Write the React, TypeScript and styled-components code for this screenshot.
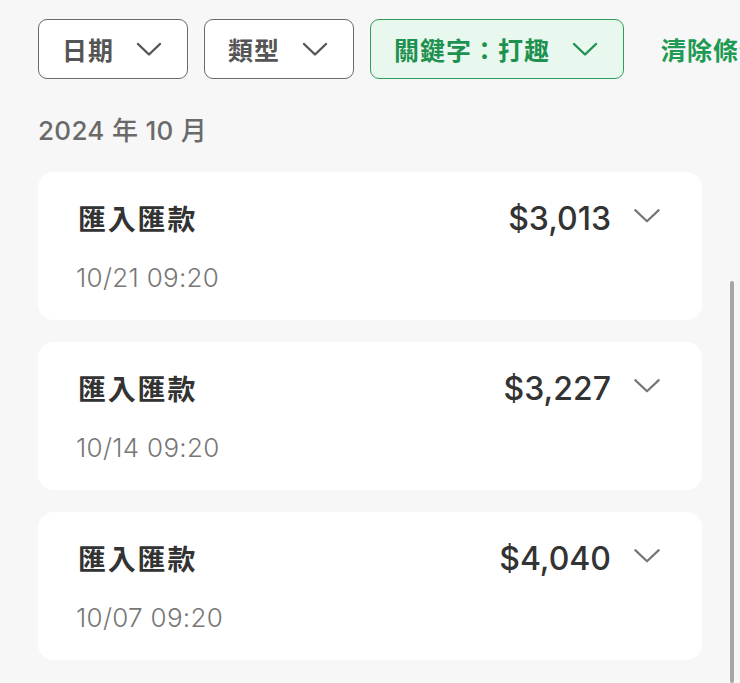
import React from "react";
import styled, { createGlobalStyle } from "styled-components";

const GlobalStyle = createGlobalStyle`
  html, body {
    margin: 0;
    padding: 0;
    background: #f7f7f7;
    font-family: Inter, "Noto Sans CJK TC", sans-serif;
    overflow: hidden;
  }
`;

type Tx = { title: string; amount: string; time: string };

const items: Tx[] = [
  { title: "匯入匯款", amount: "$3,013", time: "10/21 09:20" },
  { title: "匯入匯款", amount: "$3,227", time: "10/14 09:20" },
  { title: "匯入匯款", amount: "$4,040", time: "10/07 09:20" },
];

const Chevron = ({ size = 26, stroke = 2.4 }: { size?: number; stroke?: number }) => (
  <svg width={size} height={size / 2 + 2} viewBox="0 0 26 15" fill="none">
    <path d="M2 2 L13 12.5 L24 2" stroke="currentColor" strokeWidth={stroke} strokeLinecap="round" strokeLinejoin="round" />
  </svg>
);

const App = () => {
  return (
    <Page>
      <GlobalStyle />
      <FilterBar>
        <FilterButton>
          日期
          <Chevron />
        </FilterButton>
        <FilterButton>
          類型
          <Chevron />
        </FilterButton>
        <FilterButton active>
          關鍵字：打趣
          <Chevron />
        </FilterButton>
        <ClearLink>清除條件</ClearLink>
      </FilterBar>
      <MonthLabel>2024 年 10 月</MonthLabel>
      <List>
        {items.map((t, i) => (
          <Card key={i}>
            <CardTop>
              <Title>{t.title}</Title>
              <AmountBox>
                <Amount>{t.amount}</Amount>
                <CardChevron>
                  <Chevron size={28} stroke={2} />
                </CardChevron>
              </AmountBox>
            </CardTop>
            <Time>{t.time}</Time>
          </Card>
        ))}
      </List>
      <ScrollThumb />
    </Page>
  );
};

export default App;

const Page = styled.div`
  width: 740px;
  height: 683px;
  box-sizing: border-box;
  padding: 19px 0 0 38px;
  overflow: hidden;
`;

const FilterBar = styled.div`
  display: flex;
  align-items: center;
  gap: 16px;
  white-space: nowrap;
`;

const FilterButton = styled.div<{ active?: boolean }>`
  flex: none;
  display: flex;
  align-items: center;
  gap: 22px;
  height: 60px;
  box-sizing: border-box;
  padding: 0 25px 0 23px;
  border-radius: 9px;
  border: 1.5px solid ${(p) => (p.active ? "#2e9f5b" : "#6a6a6a")};
  background: ${(p) => (p.active ? "#e9f8ef" : "#ffffff")};
  color: ${(p) => (p.active ? "#1e9150" : "#555555")};
  font-family: "Noto Sans CJK TC", sans-serif;
  font-size: 25px;
  font-weight: 700;
  letter-spacing: 1px;
`;

const ClearLink = styled.div`
  flex: none;
  margin-left: 21px;
  color: #1e9a55;
  font-family: "Noto Sans CJK TC", sans-serif;
  font-size: 25px;
  font-weight: 700;
  letter-spacing: 1px;
`;

const MonthLabel = styled.div`
  margin-top: 36px;
  font-size: 26px;
  line-height: 32px;
  font-weight: 500;
  letter-spacing: 0.3px;
  color: #6a6a6a;
`;

const List = styled.div`
  margin-top: 25px;
  width: 664px;
  display: flex;
  flex-direction: column;
  gap: 22px;
`;

const Card = styled.div`
  background: #ffffff;
  border-radius: 16px;
  height: 148px;
  box-sizing: border-box;
  padding: 27px 41px 0 40px;
  display: flex;
  flex-direction: column;
  gap: 25px;
`;

const CardTop = styled.div`
  display: flex;
  align-items: center;
  justify-content: space-between;
  height: 38px;
`;

const Title = styled.div`
  font-family: "Noto Sans CJK TC", sans-serif;
  font-size: 28px;
  font-weight: 700;
  letter-spacing: 1.8px;
  color: #333333;
`;

const AmountBox = styled.div`
  display: flex;
  align-items: center;
  gap: 22px;
`;

const Amount = styled.div`
  font-size: 32px;
  font-weight: 500;
  color: #333333;
  letter-spacing: 0px;
`;

const CardChevron = styled.div`
  display: flex;
  color: #757575;
  margin-top: -4px;
`;

const Time = styled.div`
  margin-left: -2px;
  font-size: 26px;
  line-height: 32px;
  font-weight: 300;
  letter-spacing: 0.3px;
  color: #777777;
`;

const ScrollThumb = styled.div`
  position: fixed;
  right: 6px;
  top: 281px;
  bottom: 0;
  width: 4px;
  border-radius: 2px;
  background: #a6a6a6;
`;
